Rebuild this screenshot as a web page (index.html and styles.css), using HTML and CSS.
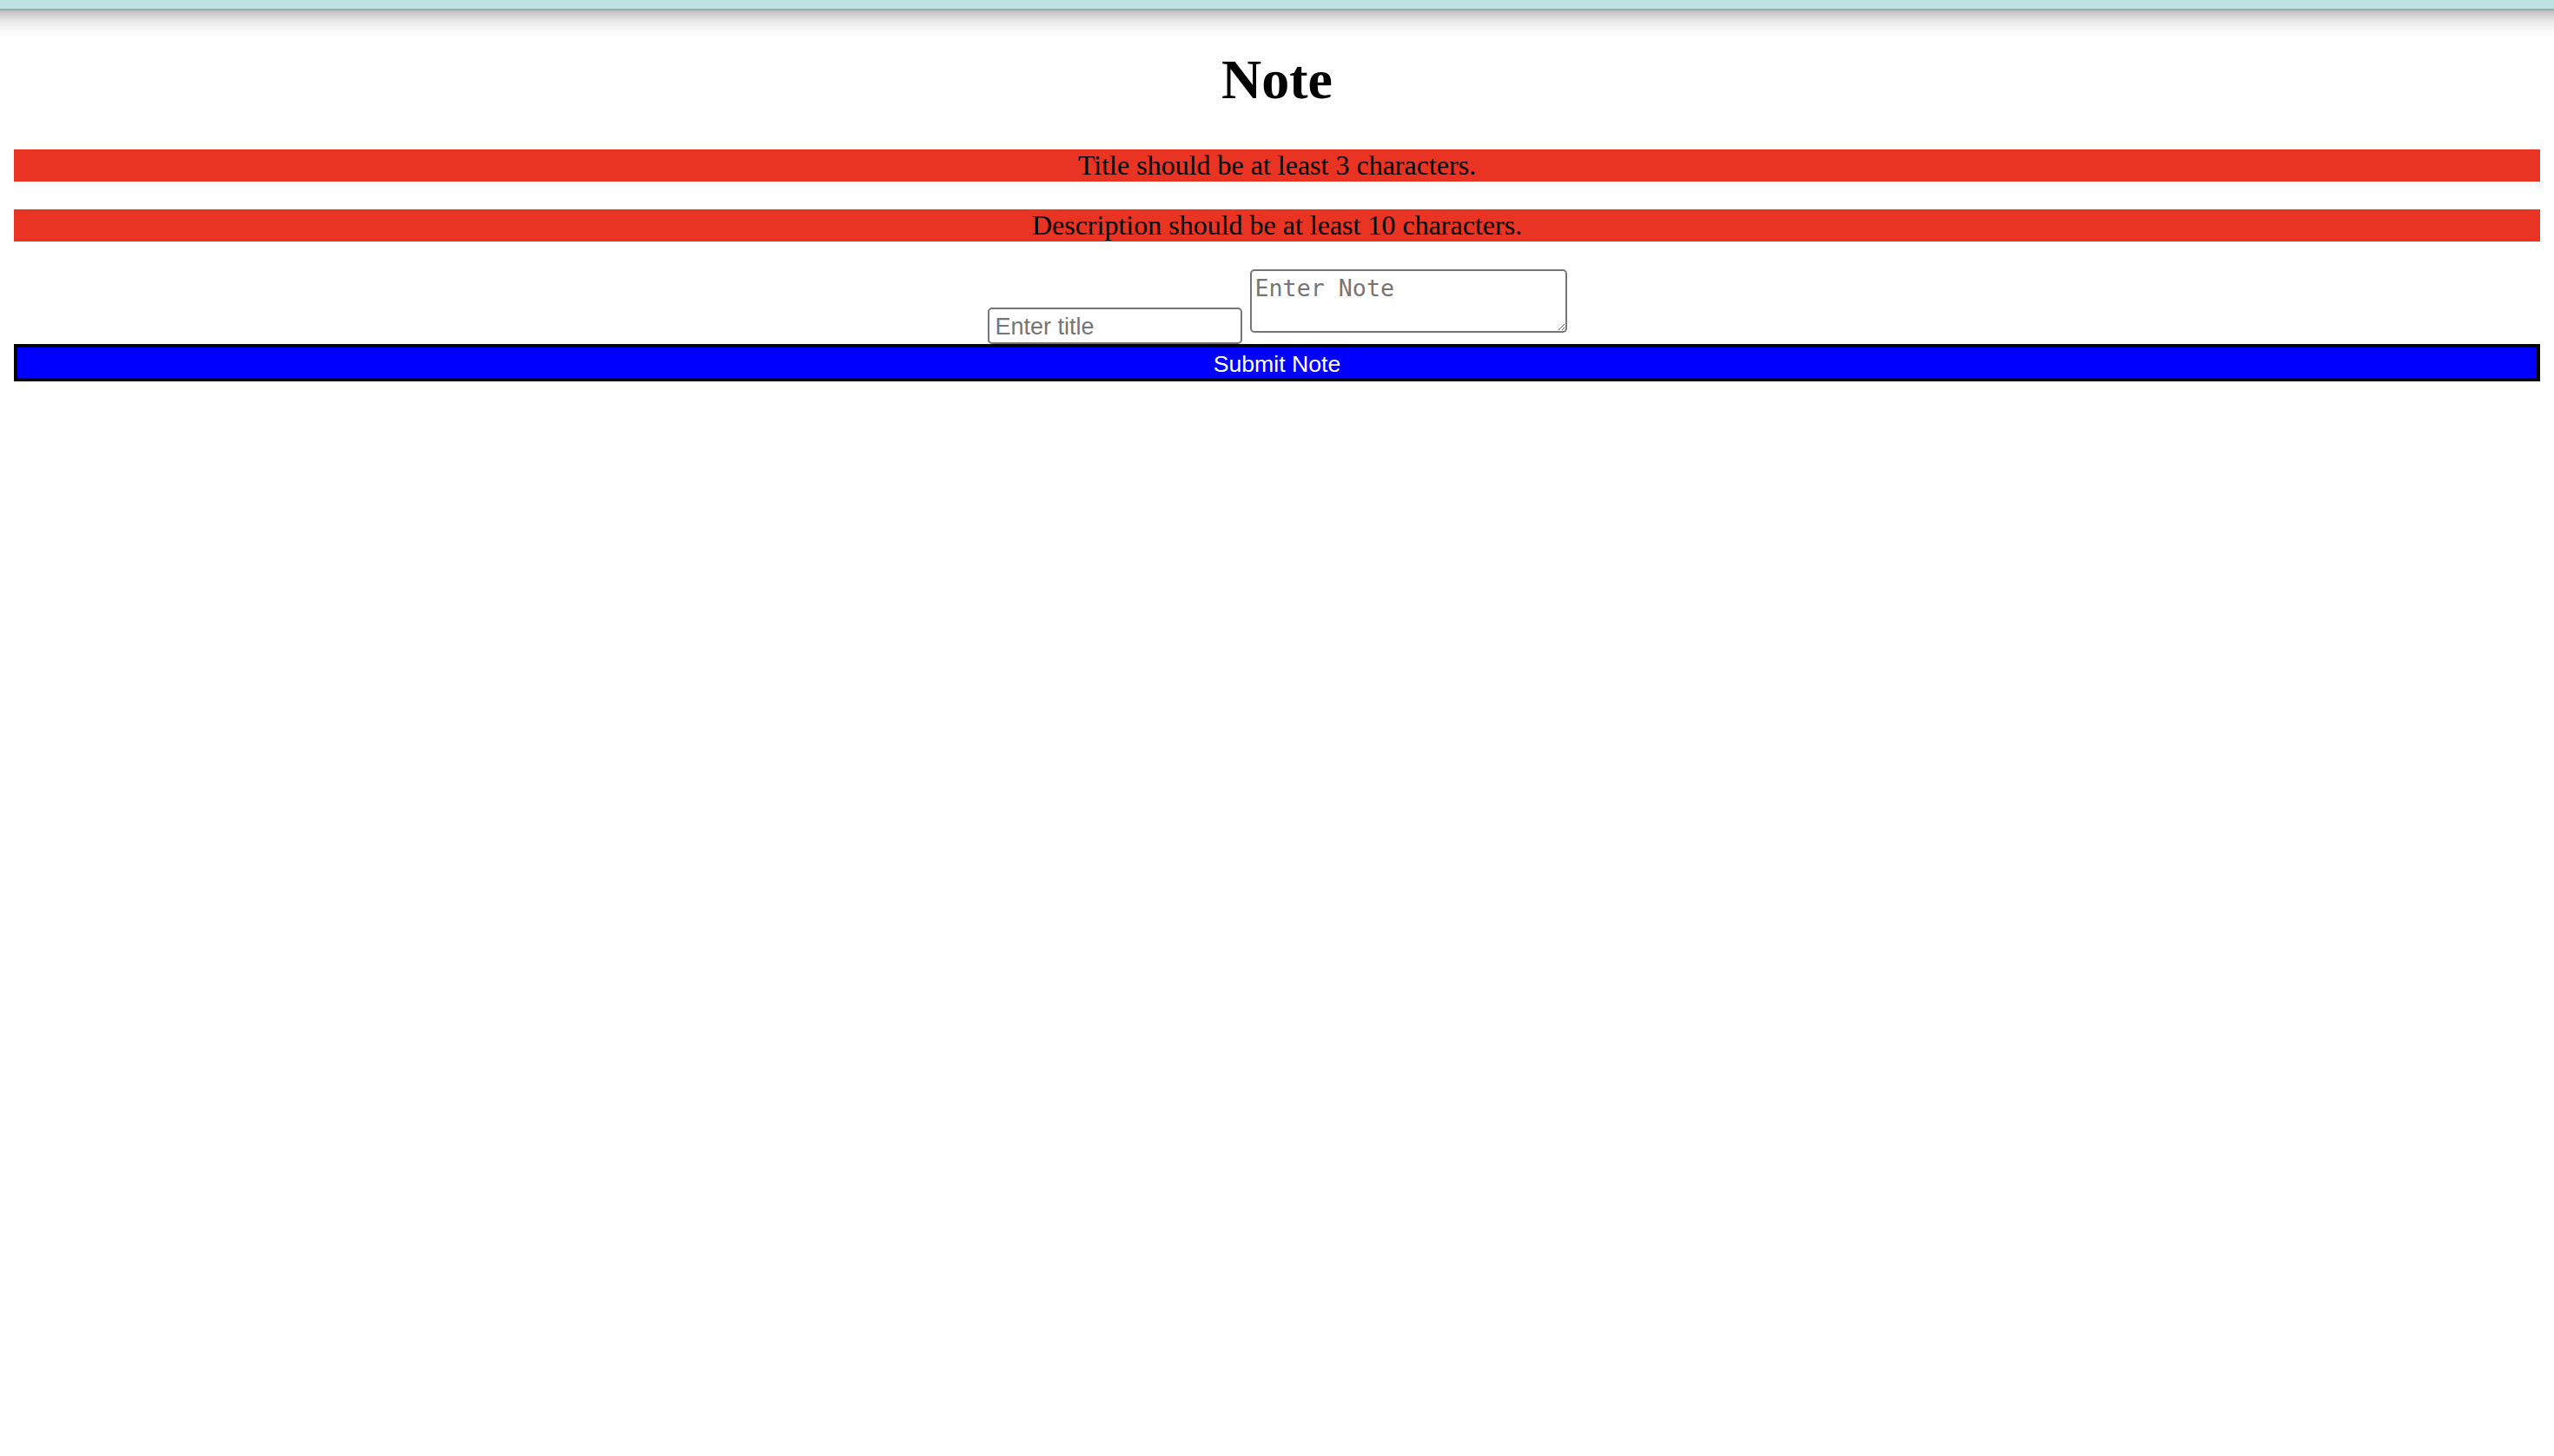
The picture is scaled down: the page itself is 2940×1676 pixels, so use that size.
FILE: index.html
```html
<!DOCTYPE html>
<html lang="en">
<head>
<meta charset="utf-8">
<title>Note</title>
<link rel="stylesheet" href="styles.css">
</head>
<body>
<div class="chrome"></div>
<main class="page">
  <h1 class="title">Note</h1>
  <p class="error">Title should be at least 3 characters.</p>
  <p class="error">Description should be at least 10 characters.</p>
  <form class="note-form">
    <div class="fields">
      <input class="title-input" type="text" placeholder="Enter title">
      <textarea class="note-input" placeholder="Enter Note"></textarea>
    </div>
    <button class="submit" type="button">Submit Note</button>
  </form>
</main>
</body>
</html>
```

FILE: styles.css
```css
html, body {
  margin: 0;
  padding: 0;
  background: #ffffff;
}

body {
  font-family: "Liberation Serif", "Times New Roman", serif;
  color: #000000;
}

.chrome {
  position: relative;
  height: 10px;
  background: #bfe1e3;
  border-bottom: 2px solid #93b0b1;
}

.chrome::after {
  content: "";
  position: absolute;
  left: 0;
  right: 0;
  top: 12px;
  height: 32px;
  background: linear-gradient(to bottom, rgba(0, 0, 0, 0.26) 0%, rgba(0, 0, 0, 0.1) 35%, rgba(0, 0, 0, 0.02) 75%, rgba(0, 0, 0, 0) 100%);
  pointer-events: none;
}

.page {
  padding: 0 16px;
}

.title {
  margin: 43px 0;
  font-size: 64px;
  line-height: 74px;
  font-weight: bold;
  text-align: center;
}

.error {
  margin: 32px 0;
  background: #e93424;
  font-size: 32px;
  line-height: 37px;
  text-align: center;
}

.note-form {
  margin: 0;
}

.fields {
  display: flex;
  justify-content: center;
  align-items: flex-end;
  gap: 9px;
}

.title-input {
  box-sizing: border-box;
  width: 293px;
  height: 42px;
  margin: 0;
  padding: 2px 7px 0 7px;
  border: 2px solid #767676;
  border-radius: 5px;
  font-family: "Liberation Sans", Arial, sans-serif;
  font-size: 27px;
  color: #000000;
  background: #ffffff;
}

.title-input::placeholder {
  color: #757575;
}

.note-input {
  box-sizing: border-box;
  width: 365px;
  height: 73px;
  margin: 0 0 13px 0;
  padding: 4px;
  border: 2px solid #767676;
  border-radius: 5px;
  font-family: "DejaVu Sans Mono", "Liberation Mono", monospace;
  font-size: 26.67px;
  line-height: 31px;
  color: #000000;
  background: #ffffff;
}

.note-input::placeholder {
  color: #757575;
}

.submit {
  display: block;
  box-sizing: border-box;
  width: 100%;
  height: 43px;
  margin: 0;
  padding: 3px 0 0 0;
  border: 4px solid #000000;
  border-radius: 0;
  background: #0000ff;
  color: #ffffff;
  font-family: "Liberation Sans", Arial, sans-serif;
  font-size: 26.67px;
  line-height: 32px;
  text-align: center;
}
```
